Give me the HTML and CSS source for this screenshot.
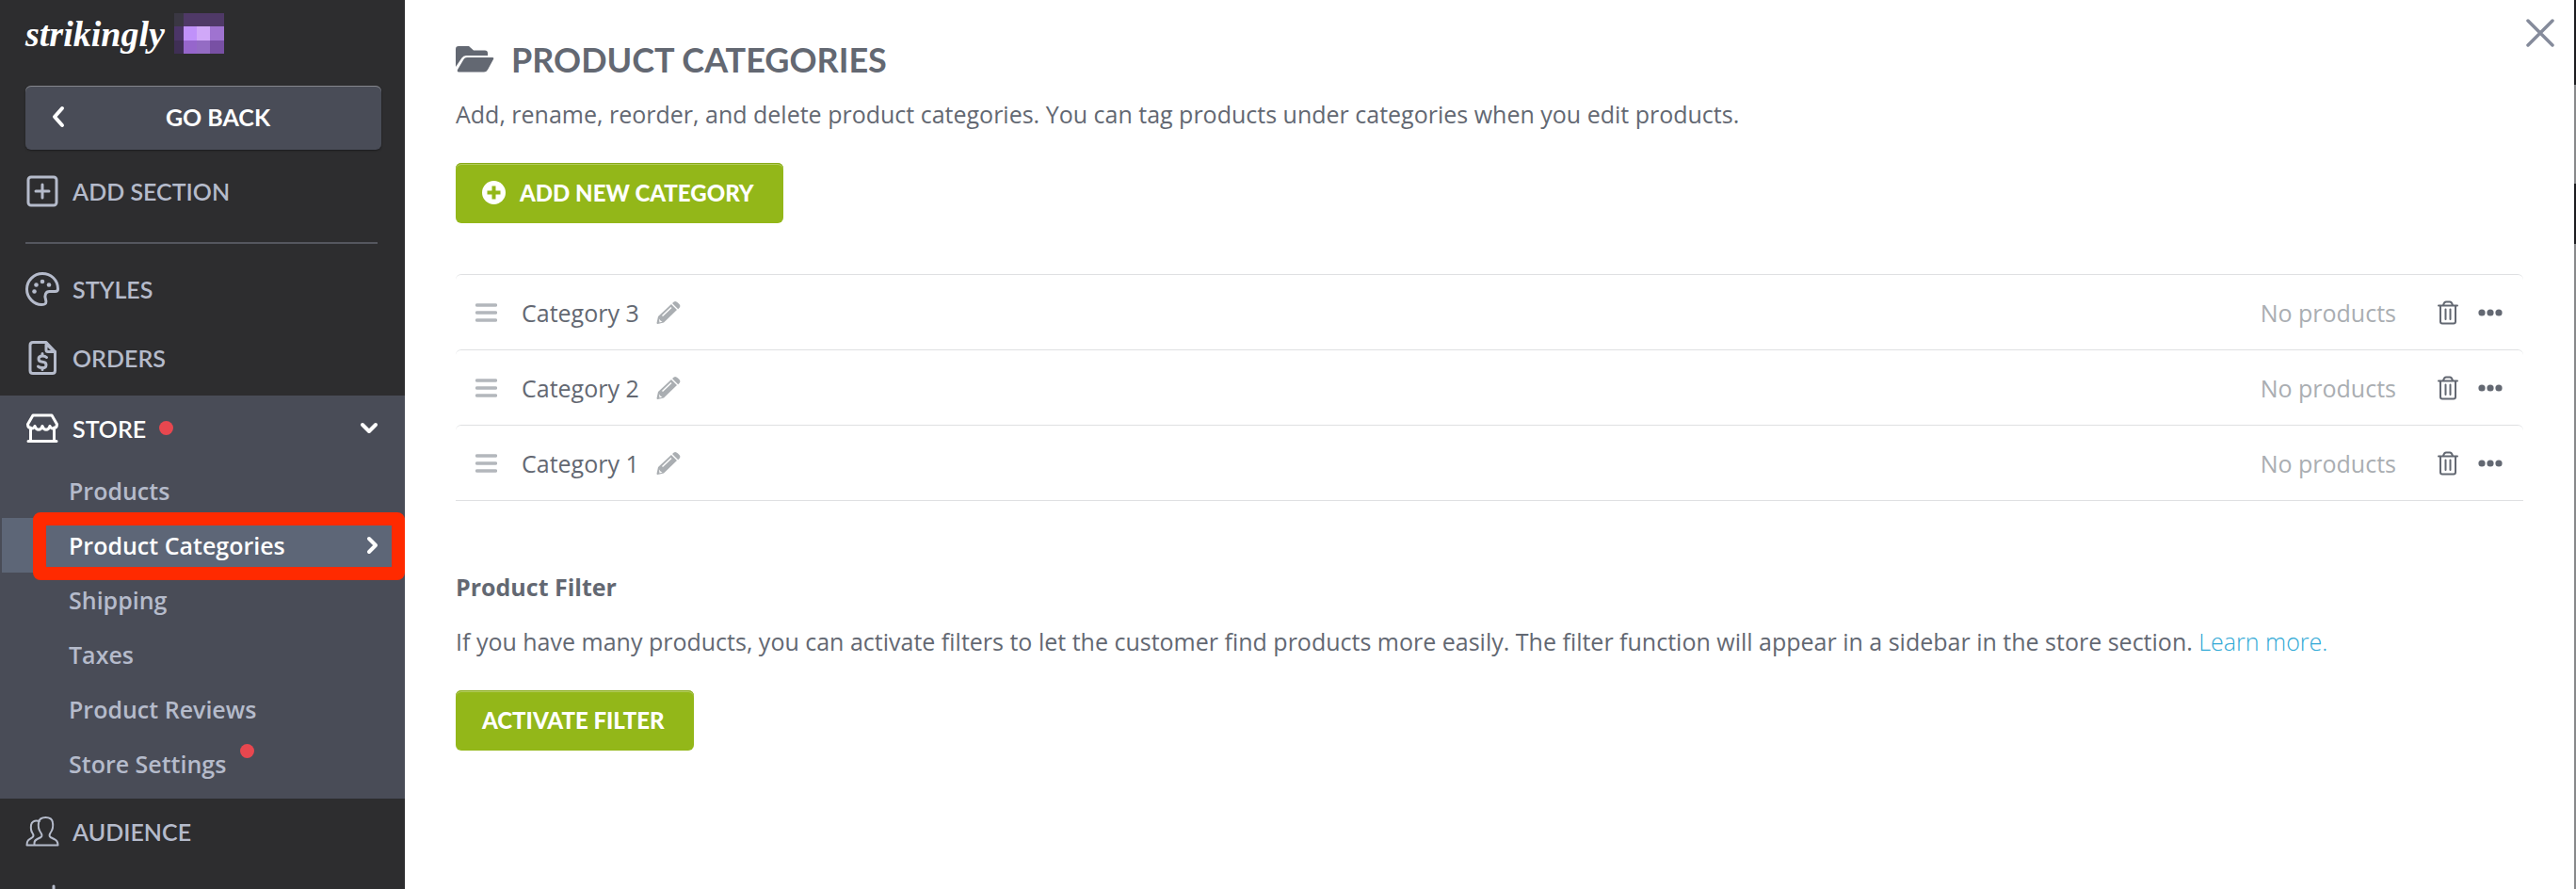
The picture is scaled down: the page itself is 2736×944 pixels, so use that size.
FILE: index.html
```html
<!DOCTYPE html>
<html lang="en">
<head>
  <meta charset="UTF-8">
  <meta name="viewport" content="width=device-width, initial-scale=1.0">
  <title>Product Categories</title>
  <link rel="stylesheet" href="styles.css">
</head>
<body>
  <aside class="sidebar">
    <div class="brand">
      <span class="brand-name">strikingly</span>
      <svg class="avatar" width="53" height="44" viewBox="0 0 53 44" shape-rendering="crispEdges">
        <path fill="#3a3743" d="M0 0h10v14H0z"/>
        <path fill="#4f3967" d="M10 0h43v14H10z"/>
        <path fill="#4b3568" d="M0 14h10v15H0z"/>
        <path fill="#3f2f55" d="M0 29h10v14H0z"/>
        <path fill="#c091fa" d="M10 14h14v15H10z"/>
        <path fill="#d0a8f8" d="M24 14h14v15H24z"/>
        <path fill="#9f73d0" d="M38 14h15v15H38z"/>
        <path fill="#9666cc" d="M10 29h14v14H10z"/>
        <path fill="#946cc4" d="M24 29h14v14H24z"/>
        <path fill="#7850a4" d="M38 29h15v14H38z"/>
      </svg>
    </div>

    <button class="go-back" type="button">
      <svg width="16" height="24" viewBox="0 0 16 24"><path d="M12 3L4 12l8 9" fill="none" stroke="#fff" stroke-width="4" stroke-linecap="round" stroke-linejoin="round"/></svg>
      <span>GO BACK</span>
    </button>

    <nav class="menu">
      <a class="menu-item" href="#">
        <svg class="menu-icon" viewBox="0 0 36 36"><rect x="3" y="3" width="30" height="30" rx="3"/><path d="M18 11v14M11 18h14"/></svg>
        <span>ADD SECTION</span>
      </a>
      <hr class="divider">
      <a class="menu-item" href="#">
        <svg class="menu-icon" viewBox="0 0 36 36"><path d="M34.500 18C34.500 8 27 1.500 18 1.500S1.500 9 1.500 18 9 34.500 17 34.500c5.500 0 5.500-2.500 4.500-5.500-1.500-4.500 0-8.500 4-8.500h6c2 0 3-1 3-2.500z"/><g class="dots"><circle cx="9.500" cy="20.500" r="2.300"/><circle cx="11.500" cy="13.500" r="2.300"/><circle cx="18" cy="10" r="2.300"/><circle cx="25" cy="13.500" r="2.300"/></g></svg>
        <span>STYLES</span>
      </a>
      <a class="menu-item" href="#">
        <svg class="menu-icon" viewBox="0 0 36 36"><path d="M8 1.500h14l9.500 10v20q0 3-3 3H8q-3 0-3-3v-27q0-3 3-3z"/><path d="M22 2v7.500q0 2 2 2h7.500M22 3l9 9"/><path d="M22.500 17.500q-1.500-1.500-4.500-1.500-4 0-4 3t4 3.200 4 3.400-4 3q-3 0-4.500-1.500M18 13.500v2.500M18 28.600v2"/></svg>
        <span>ORDERS</span>
      </a>

      <section class="menu-group">
        <a class="menu-item menu-item-open" href="#">
          <svg class="menu-icon" viewBox="0 0 36 36"><path d="M8 4h20l5.500 9.500c0 5-6 6-7.500 2-1.500 5-6.500 5-8 0-1.500 5-6.500 5-8 0-1.500 4-7.500 3-7.500-2zM5.500 17v14.500M30.500 17v14.500M3 31.500h30"/></svg>
          <span>STORE</span>
          <i class="dot"></i>
          <svg class="arrow" width="20" height="14" viewBox="0 0 20 14"><path d="M3 3l7 7 7-7"/></svg>
        </a>
        <ul class="submenu">
          <li><a href="#">Products</a></li>
          <li class="active">
            <a href="#">Product Categories
              <svg class="arrow" width="14" height="20" viewBox="0 0 14 20"><path d="M4 3l7 7-7 7"/></svg>
            </a>
          </li>
          <li><a href="#">Shipping</a></li>
          <li><a href="#">Taxes</a></li>
          <li><a href="#">Product Reviews</a></li>
          <li><a href="#">Store Settings<i class="dot dot-raised"></i></a></li>
        </ul>
      </section>

      <a class="menu-item" href="#">
        <svg class="menu-icon menu-icon-thin" viewBox="0 0 36 36"><path d="M9.500 32.500V30c0-2 1-3 3-4l4-2c1.500-1 1-3 0-4.500-3-4-3-8-2.500-11C14.500 5 17.500 3 21.500 3S28.500 5 29 8.500c.5 3 .5 7-2.500 11-1 1.500-1.500 3.500 0 4.500l4 2c2.500 1 4 3 4 6.500zM15 7C9 5.500 6.500 8 6 11c-.5 4 0 7 2 9.500 1 1.500.5 3-1 4-3.500 2-5.500 3-5.500 8h8"/></svg>
        <span>AUDIENCE</span>
      </a>
      <a class="menu-item menu-item-last" href="#" aria-label="More">
        <svg class="menu-icon" viewBox="0 0 36 36"><path d="M30 3v12M6 15h24v18H6z"/></svg>
      </a>
    </nav>
  </aside>

  <main class="content">
    <button class="close" type="button" aria-label="Close">
      <svg width="30" height="30" viewBox="0 0 30 30"><path d="M2 2l26 26M28 2L2 28" stroke="#858b9b" stroke-width="3.500" stroke-linecap="round"/></svg>
    </button>

    <h1 class="title">
      <svg width="41" height="28" viewBox="0 0 41 28"><path fill="#636872" d="M0 22V3q0-3 3-3h11l5 4.500h12q3 0 3 3V10H11q-3 0-4.500 2.500zM2 25l6.500-11q1-2 3.500-2h27q2 0 1 2l-6 11q-1.500 2.500-4 2.500H3.500q-2.500 0-1.500-2.500z"/></svg>
      PRODUCT CATEGORIES
    </h1>
    <p class="text">Add, rename, reorder, and delete product categories. You can tag products under categories when you edit products.</p>
    <button class="btn" type="button">
      <svg width="25" height="25" viewBox="0 0 25 25"><circle cx="12.500" cy="12.500" r="12.500" fill="#fff"/><path d="M12.500 5.500v14M5.500 12.500h14" stroke="#93b719" stroke-width="4"/></svg>
      ADD NEW CATEGORY
    </button>

    <ul class="categories"></ul>

    <h2 class="subtitle">Product Filter</h2>
    <p class="text">If you have many products, you can activate filters to let the customer find products more easily. The filter function will appear in a sidebar in the store section. <a href="#">Learn more.</a></p>
    <button class="btn" type="button">ACTIVATE FILTER</button>
  </main>
  <div class="backdrop"></div>

  <template id="category-row">
    <li class="category">
      <svg class="handle" width="23" height="20" viewBox="0 0 23 20"><path d="M1.500 2h20M1.500 10h20M1.500 18h20" stroke="#b3b7bc" stroke-width="3.500" stroke-linecap="round"/></svg>
      <span class="category-name"></span>
      <button class="icon-btn" type="button" aria-label="Rename">
        <svg width="26" height="26" viewBox="0 0 26 26"><path fill="#aaaeb2" d="M16 4l6 6L8 23.500 1.500 25q-1 0-1-1L2 17zM17.500 2.500q2.500-3 5.500 0l1.500 1.500q2 2.500-.5 4.500l-.8.700-6-6z"/><path d="M16 7.500L6.500 16.500" stroke="#fff" stroke-width="1.500"/><path fill="#fff" d="M3 19.500l1.500 2 2 1-3 1z"/></svg>
      </button>
      <span class="count">No products</span>
      <button class="icon-btn" type="button" aria-label="Delete">
        <svg width="22" height="26" viewBox="0 0 22 26"><path d="M1 5.500h20M6 5q1-3.500 3-3.500h4q2 0 3 3.500M3 6v16.500q0 2 2 2h12q2 0 2-2V6M8.500 9.500v10.500M13.500 9.500v10.500" fill="none" stroke="#636872" stroke-width="2" stroke-linecap="round"/></svg>
      </button>
      <button class="icon-btn" type="button" aria-label="More options">
        <svg width="26" height="8" viewBox="0 0 26 8"><g fill="#636872"><circle cx="4" cy="4" r="3.600"/><circle cx="13" cy="4" r="3.600"/><circle cx="22" cy="4" r="3.600"/></g></svg>
      </button>
    </li>
  </template>

  <script>
    const names = ['Category 3', 'Category 2', 'Category 1'];
    const list = document.querySelector('.categories');
    const template = document.getElementById('category-row');

    // Add one row per category
    names.forEach(name => {
      const row = template.content.cloneNode(true);
      row.querySelector('.category-name').innerText = name;
      list.appendChild(row);
    });
  </script>
</body>
</html>
```

FILE: styles.css
```css
* {
  box-sizing: border-box;
}
body {
  margin: 0;
  display: flex;
  height: 100vh;
  overflow: hidden;
  font-family: "Open Sans", sans-serif;
  font-size: 25px;
  line-height: 38px;
  color: #636872;
  background-color: #fff;
}
a {
  text-decoration: none;
}
button {
  border: none;
  cursor: pointer;
}
svg {
  flex: none;
}

/* Sidebar */
.sidebar {
  flex: none;
  width: 430px;
  overflow: hidden;
  background-color: #2d2d2f;
}
.brand {
  display: flex;
  align-items: center;
  gap: 10px;
  height: 91px;
  padding: 0 27px 20px;
}
.brand-name {
  font-family: "Liberation Serif", serif;
  font-size: 38px;
  font-weight: bold;
  font-style: italic;
  color: #fff;
}
.go-back {
  display: flex;
  align-items: center;
  width: 378px;
  height: 68px;
  margin: 0 27px 9px;
  padding: 0 12px 2px 27px;
  border-radius: 6px;
  background-color: #494c57;
  box-shadow: inset 0 1px 0 #85878d, 0 1px 2px #1c1c1e;
  color: #fff;
  font: bold 25px Lato, sans-serif;
}
.go-back span {
  flex: 1;
}
.menu-item {
  display: flex;
  align-items: center;
  gap: 14px;
  height: 73px;
  padding: 0 28px 3px 27px;
  font-family: Lato, sans-serif;
  font-size: 25px;
  font-weight: 600;
  color: #b5bbcb;
}
.menu-icon {
  width: 36px;
  height: 36px;
  fill: none;
  stroke: currentColor;
  stroke-width: 3;
  stroke-linecap: round;
  stroke-linejoin: round;
}
.menu-icon-thin {
  stroke-width: 2;
}
.dots {
  fill: currentColor;
  stroke: none;
}
.divider {
  height: 2px;
  margin: 16px 29px 13px 27px;
  border: none;
  background-color: #55575f;
}
.menu-group {
  margin-top: 2px;
  padding-bottom: 8px;
  background-color: #494c57;
}
.menu-item-open {
  height: 72px;
  color: #fff;
}
.dot {
  width: 15px;
  height: 15px;
  border-radius: 50%;
  background-color: #e8474f;
}
.arrow {
  margin-left: auto;
  fill: none;
  stroke: #fff;
  stroke-width: 4;
  stroke-linecap: round;
  stroke-linejoin: round;
}
.submenu {
  list-style: none;
  margin: 0;
  padding: 0;
  font-weight: 600;
}
.submenu a {
  display: flex;
  align-items: center;
  height: 58px;
  padding: 0 28px 1px 71px;
  border-left: 2px solid transparent;
  background-clip: padding-box;
  color: #b5bbcb;
}
.submenu .active {
  position: relative;
}
.submenu .active a {
  background-color: #5d6677;
  color: #fff;
}
/* Highlight frame round the current page */
.active::after {
  content: "";
  position: absolute;
  inset: -6px 0 -8px 35px;
  border: 14px solid #ff2a00;
  border-radius: 8px;
}
.dot-raised {
  margin: 0 0 26px 15px;
}
.menu-item-last {
  align-items: flex-start;
  padding-top: 17px;
}

/* Content */
.content {
  position: relative;
  flex: 1;
  min-width: 0;
  padding: 41px 54px;
}
.close {
  position: absolute;
  top: 20px;
  right: 21px;
  padding: 0;
  line-height: 0;
  background: none;
}
.title {
  display: flex;
  align-items: center;
  gap: 18px;
  margin: 0 0 17px;
  font-family: Lato, sans-serif;
  font-size: 36px;
  line-height: 44px;
}
.text {
  margin: 0 0 33px;
}
.text a {
  color: #31a9d6;
  font-weight: 300;
}
.btn {
  display: flex;
  align-items: center;
  gap: 15px;
  height: 64px;
  padding: 0 31px 2px 28px;
  border-radius: 6px;
  background-color: #93b719;
  box-shadow: inset 0 1px 0 #89aa1a, inset 0 2px 0 #b3cc5e;
  color: #fff;
  font: 900 24px Lato, sans-serif;
}
.categories {
  list-style: none;
  margin: 54px 0 72px;
  padding: 0;
  border-bottom: 1px solid #dfe0e2;
}
.category {
  display: flex;
  align-items: center;
  height: 80px;
  padding: 0 22px 0 21px;
  border-top: 1px solid #dfe0e2;
  border-radius: 6px 6px 0 0;
}
.handle {
  margin-right: 26px;
}
.category-name {
  margin-right: 18px;
}
.icon-btn {
  display: flex;
  padding: 0;
  background: none;
}
.count {
  margin: 0 44px 0 auto;
  color: #aaaeb2;
}
.icon-btn + .icon-btn {
  margin-left: 21px;
}
.subtitle {
  margin: 0 0 20px;
  font-size: 25px;
}

/* Page showing behind the panel */
.backdrop {
  flex: none;
  width: 2px;
  background: linear-gradient(#1d1d20 90px, #88898b 90px 195px, #1d1d20 195px 259px, #88898b 259px);
}
```
